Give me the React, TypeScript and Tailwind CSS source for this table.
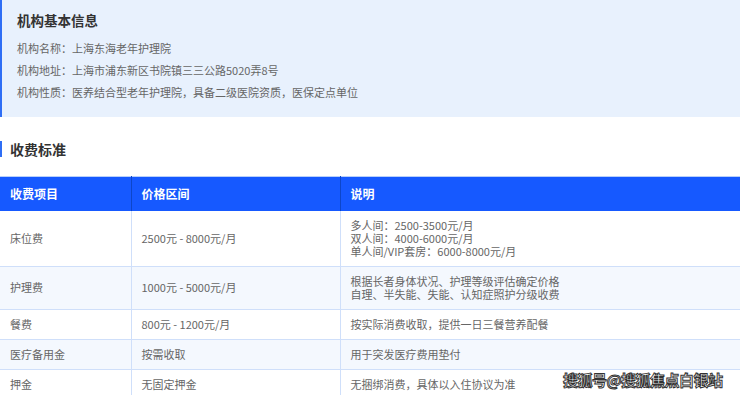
const rows = [
  { item: "床位费", price: "2500元 - 8000元/月", note: ["多人间：2500-3500元/月", "双人间：4000-6000元/月", "单人间/VIP套房：6000-8000元/月"] },
  { item: "护理费", price: "1000元 - 5000元/月", note: ["根据长者身体状况、护理等级评估确定价格", "自理、半失能、失能、认知症照护分级收费"] },
  { item: "餐费", price: "800元 - 1200元/月", note: ["按实际消费收取，提供一日三餐营养配餐"] },
  { item: "医疗备用金", price: "按需收取", note: ["用于突发医疗费用垫付"] },
  { item: "押金", price: "无固定押金", note: ["无捆绑消费，具体以入住协议为准"] },
];

export default function App() {
  return (
    <div
      className="relative h-[395px] w-[740px] overflow-hidden bg-white"
      style={{ fontFamily: '"Noto Sans CJK SC", "Noto Sans", sans-serif' }}
    >
      {/* 机构信息 */}
      <div className="h-[117px] border-l-2 border-[#2f6ef5] bg-[#e8f1fd] pl-[15px] pt-[10px]">
        <h3 className="text-[13.5px] leading-[20px] font-bold text-[#333]">机构基本信息</h3>
        <div className="mt-[10px] flex flex-col gap-[6px] text-[11px] leading-[16px] text-[#666]">
          <p>机构名称：上海东海老年护理院</p>
          <p>机构地址：上海市浦东新区书院镇三三公路5020弄8号</p>
          <p>机构性质：医养结合型老年护理院，具备二级医院资质，医保定点单位</p>
        </div>
      </div>

      {/* 收费标准 */}
      <div className="mt-[23px] flex items-center gap-[8px]">
        <span className="h-[16px] w-[2px] bg-[#2f6ef5]" />
        <h2 className="text-[14px] leading-[18px] font-bold text-[#333]">收费标准</h2>
      </div>

      <table className="mt-[18px] w-full table-fixed border-collapse border-t border-[#b9d0fa] text-left text-[11px]">
        <colgroup>
          <col className="w-[131px]" />
          <col className="w-[209px]" />
          <col />
        </colgroup>
        <thead>
          <tr className="h-[34px] bg-[#1659ff] text-[12px] text-white">
            <th className="pl-[10px] font-bold">收费项目</th>
            <th className="border-l border-[#0d46c9] pl-[10px] font-bold">价格区间</th>
            <th className="border-l border-[#0d46c9] pl-[10px] font-bold">说明</th>
          </tr>
        </thead>
        <tbody className="text-[#666]">
          {rows.map((r, i) => (
            <tr key={r.item} className={i % 2 === 1 ? "bg-[#f4f8fe]" : "bg-white"}>
              <td className="border-b border-[#cfdffa] py-[8px] pl-[10px] leading-[13px]">{r.item}</td>
              <td className="border-b border-l border-[#cfdffa] py-[8px] pl-[10px] leading-[13px]">{r.price}</td>
              <td className="border-b border-l border-[#cfdffa] py-[8px] pl-[10px] leading-[13px]">
                {r.note.map((n) => (
                  <div key={n}>{n}</div>
                ))}
              </td>
            </tr>
          ))}
        </tbody>
      </table>

      {/* watermark */}
      <div
        className="absolute left-[563px] top-[370px] text-[15px] leading-[20px] font-bold text-white"
        style={{ WebkitTextStroke: "1px #333", letterSpacing: "-0.5px" }}
      >
        搜狐号@搜狐焦点白银站
      </div>
    </div>
  );
}
